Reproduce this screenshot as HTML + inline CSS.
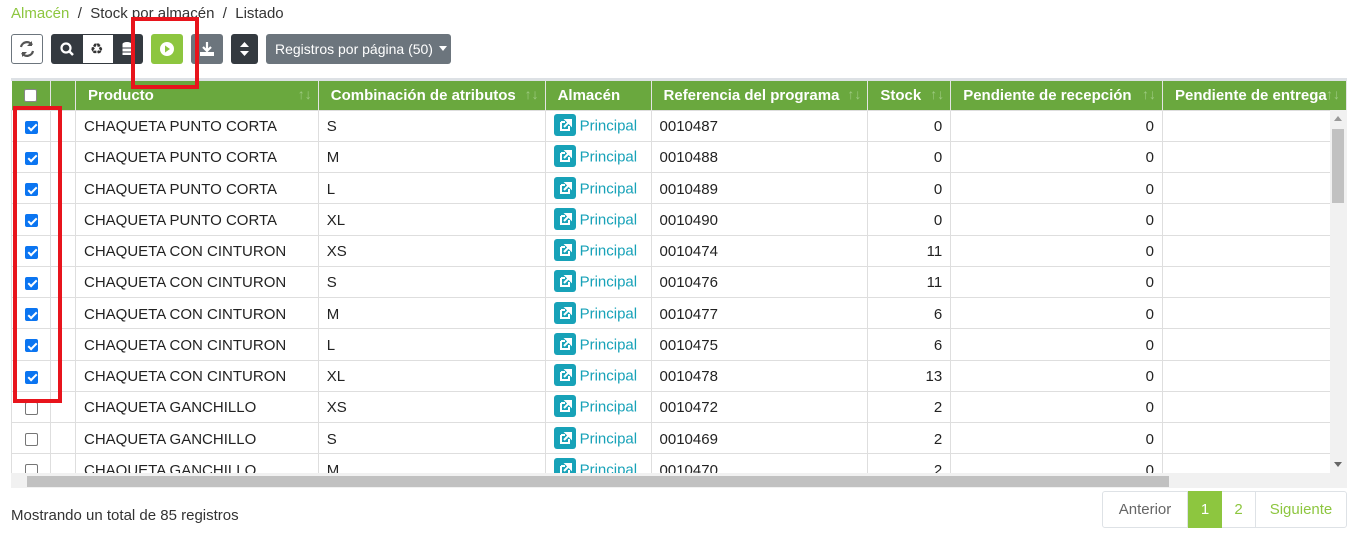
<!DOCTYPE html>
<html><head><meta charset="utf-8"><style>
*{box-sizing:border-box;margin:0;padding:0}
body{width:1353px;height:536px;background:#fff;font-family:"Liberation Sans",sans-serif;color:#222;position:relative;overflow:hidden}
.abs{position:absolute}
.bc{left:11px;top:5px;font-size:15px;color:#333}
.bc .g{color:#8dc63f}
.btn{position:absolute;top:34px;height:30px;border-radius:3px}
.wrap{position:absolute;left:11px;top:78px;width:1336px;height:410px;overflow:hidden;border-top:3px solid #dde1e5}
table{border-collapse:collapse;table-layout:fixed;position:absolute;left:0;top:0}
th{background:#6aa83e;color:#fff;font-size:15px;font-weight:bold;text-align:left;height:29px;padding:0 12px;border-right:1px solid #e4e4e4;white-space:nowrap;position:relative}
th .s{position:absolute;right:6px;top:5px;color:#9dca80;font-weight:normal;font-size:14px}
td{height:31.25px;border:1px solid #dedede;font-size:15px;padding:2px 8px 0;white-space:nowrap;overflow:hidden}
td.r{text-align:right}
.cb{display:inline-block;width:13px;height:13px;border:1px solid #767676;border-radius:2px;background:#fff;vertical-align:middle}
.cb.on{background:#0b75f1;border-color:#0b75f1;position:relative}
.cb.on:after{content:"";position:absolute;left:3.5px;top:0.5px;width:3px;height:7px;border:solid #fff;border-width:0 2px 2px 0;transform:rotate(45deg)}
.ic{display:inline-block;width:22px;height:22px;background:#17a2b8;border-radius:3px;vertical-align:middle;position:relative;margin-right:4px;margin-top:-3px}
.ic svg{position:absolute;left:0;top:0}
.pl{color:#17a2b8}
</style></head><body>
<div class="abs bc"><span class="g">Almacén</span> &nbsp;/&nbsp; Stock por almacén &nbsp;/&nbsp; Listado</div>

<div class="btn" style="left:11px;width:32px;border:1px solid #6c757d;background:#fff">
<svg width="30" height="28" viewBox="0 0 30 28"><path d="M9 12a6 6 0 0 1 11-2M21 16a6 6 0 0 1-11 2" stroke="#555" stroke-width="2.2" fill="none"/><path d="M20 6v5h-5z M10 22v-5h5z" fill="#555"/></svg></div>
<div class="btn" style="left:51px;width:92px;background:#343a40"></div>
<div class="btn" style="left:83px;width:30px;top:34px;background:#fff;border-radius:0;border-top:1px solid #343a40;border-bottom:1px solid #343a40"></div>
<svg class="abs" style="left:51px;top:34px" width="92" height="30"><circle cx="15" cy="14" r="4.5" stroke="#fff" stroke-width="2.2" fill="none"/><path d="M18 17l4 4" stroke="#fff" stroke-width="2.5"/><text x="39" y="20" font-size="15" fill="#333">♻</text><ellipse cx="76" cy="10" rx="4.5" ry="2" fill="#fff"/><rect x="71.5" y="10" width="9" height="11" fill="#fff"/><path d="M71.5 14h9M71.5 18h9" stroke="#343a40" stroke-width="1"/></svg>
<div class="btn" style="left:151px;width:32px;background:#8dc63f"><svg width="32" height="30"><circle cx="16" cy="15" r="7" fill="#fff"/><path d="M14 11.5v7l5-3.5z" fill="#8dc63f"/></svg></div>
<div class="btn" style="left:191px;width:32px;background:#6c757d"><svg width="32" height="30"><path d="M16 8v8M12 13l4 4 4-4" stroke="#fff" stroke-width="2.2" fill="none"/><rect x="9" y="18" width="14" height="4" fill="#fff"/></svg></div>
<div class="btn" style="left:231px;width:27px;background:#343a40"><svg width="27" height="30"><path d="M9 13l4.5-5 4.5 5zM9 17l4.5 5 4.5-5z" fill="#fff"/></svg></div>
<div class="btn" style="left:266px;width:185px;background:#6c757d;color:#fff;font-size:14px;line-height:30px;padding-left:9px">Registros por página (50) <span style="display:inline-block;border:4px solid transparent;border-top:5px solid #fff;vertical-align:middle;margin-left:2px"></span></div>

<div class="abs" style="left:131px;top:17px;width:68px;height:72px;border:4px solid #e8141c;z-index:5"></div>
<div class="abs" style="left:13px;top:106px;width:49px;height:297px;border:4px solid #e8141c;z-index:5"></div>

<div class="wrap">
<table>
<colgroup><col style="width:39px"><col style="width:25px"><col style="width:243px"><col style="width:227px"><col style="width:106px"><col style="width:217px"><col style="width:83px"><col style="width:212px"><col style="width:184px"></colgroup>
<tr><th style="padding:0 12px"><span class="cb" style="border-color:#888"></span></th><th></th><th>Producto<span class="s">↑↓</span></th><th>Combinación de atributos<span class="s">↑↓</span></th><th>Almacén</th><th>Referencia del programa<span class="s">↑↓</span></th><th>Stock<span class="s">↑↓</span></th><th>Pendiente de recepción<span class="s">↑↓</span></th><th>Pendiente de entrega<span class="s">↑↓</span></th></tr>
<tr><td style="padding-left:13px"><span class="cb on"></span></td><td></td><td>CHAQUETA PUNTO CORTA</td><td>S</td><td><span class="ic"><svg width="22" height="22"><path d="M7 8h4M7 8v8h8v-4" stroke="#fff" stroke-width="2" fill="none"/><path d="M10 13l6-6M12 6h5v5z" stroke="#fff" stroke-width="2" fill="#fff"/></svg></span><span class="pl">Principal</span></td><td>0010487</td><td class="r">0</td><td class="r">0</td><td></td></tr>
<tr><td style="padding-left:13px"><span class="cb on"></span></td><td></td><td>CHAQUETA PUNTO CORTA</td><td>M</td><td><span class="ic"><svg width="22" height="22"><path d="M7 8h4M7 8v8h8v-4" stroke="#fff" stroke-width="2" fill="none"/><path d="M10 13l6-6M12 6h5v5z" stroke="#fff" stroke-width="2" fill="#fff"/></svg></span><span class="pl">Principal</span></td><td>0010488</td><td class="r">0</td><td class="r">0</td><td></td></tr>
<tr><td style="padding-left:13px"><span class="cb on"></span></td><td></td><td>CHAQUETA PUNTO CORTA</td><td>L</td><td><span class="ic"><svg width="22" height="22"><path d="M7 8h4M7 8v8h8v-4" stroke="#fff" stroke-width="2" fill="none"/><path d="M10 13l6-6M12 6h5v5z" stroke="#fff" stroke-width="2" fill="#fff"/></svg></span><span class="pl">Principal</span></td><td>0010489</td><td class="r">0</td><td class="r">0</td><td></td></tr>
<tr><td style="padding-left:13px"><span class="cb on"></span></td><td></td><td>CHAQUETA PUNTO CORTA</td><td>XL</td><td><span class="ic"><svg width="22" height="22"><path d="M7 8h4M7 8v8h8v-4" stroke="#fff" stroke-width="2" fill="none"/><path d="M10 13l6-6M12 6h5v5z" stroke="#fff" stroke-width="2" fill="#fff"/></svg></span><span class="pl">Principal</span></td><td>0010490</td><td class="r">0</td><td class="r">0</td><td></td></tr>
<tr><td style="padding-left:13px"><span class="cb on"></span></td><td></td><td>CHAQUETA CON CINTURON</td><td>XS</td><td><span class="ic"><svg width="22" height="22"><path d="M7 8h4M7 8v8h8v-4" stroke="#fff" stroke-width="2" fill="none"/><path d="M10 13l6-6M12 6h5v5z" stroke="#fff" stroke-width="2" fill="#fff"/></svg></span><span class="pl">Principal</span></td><td>0010474</td><td class="r">11</td><td class="r">0</td><td></td></tr>
<tr><td style="padding-left:13px"><span class="cb on"></span></td><td></td><td>CHAQUETA CON CINTURON</td><td>S</td><td><span class="ic"><svg width="22" height="22"><path d="M7 8h4M7 8v8h8v-4" stroke="#fff" stroke-width="2" fill="none"/><path d="M10 13l6-6M12 6h5v5z" stroke="#fff" stroke-width="2" fill="#fff"/></svg></span><span class="pl">Principal</span></td><td>0010476</td><td class="r">11</td><td class="r">0</td><td></td></tr>
<tr><td style="padding-left:13px"><span class="cb on"></span></td><td></td><td>CHAQUETA CON CINTURON</td><td>M</td><td><span class="ic"><svg width="22" height="22"><path d="M7 8h4M7 8v8h8v-4" stroke="#fff" stroke-width="2" fill="none"/><path d="M10 13l6-6M12 6h5v5z" stroke="#fff" stroke-width="2" fill="#fff"/></svg></span><span class="pl">Principal</span></td><td>0010477</td><td class="r">6</td><td class="r">0</td><td></td></tr>
<tr><td style="padding-left:13px"><span class="cb on"></span></td><td></td><td>CHAQUETA CON CINTURON</td><td>L</td><td><span class="ic"><svg width="22" height="22"><path d="M7 8h4M7 8v8h8v-4" stroke="#fff" stroke-width="2" fill="none"/><path d="M10 13l6-6M12 6h5v5z" stroke="#fff" stroke-width="2" fill="#fff"/></svg></span><span class="pl">Principal</span></td><td>0010475</td><td class="r">6</td><td class="r">0</td><td></td></tr>
<tr><td style="padding-left:13px"><span class="cb on"></span></td><td></td><td>CHAQUETA CON CINTURON</td><td>XL</td><td><span class="ic"><svg width="22" height="22"><path d="M7 8h4M7 8v8h8v-4" stroke="#fff" stroke-width="2" fill="none"/><path d="M10 13l6-6M12 6h5v5z" stroke="#fff" stroke-width="2" fill="#fff"/></svg></span><span class="pl">Principal</span></td><td>0010478</td><td class="r">13</td><td class="r">0</td><td></td></tr>
<tr><td style="padding-left:13px"><span class="cb"></span></td><td></td><td>CHAQUETA GANCHILLO</td><td>XS</td><td><span class="ic"><svg width="22" height="22"><path d="M7 8h4M7 8v8h8v-4" stroke="#fff" stroke-width="2" fill="none"/><path d="M10 13l6-6M12 6h5v5z" stroke="#fff" stroke-width="2" fill="#fff"/></svg></span><span class="pl">Principal</span></td><td>0010472</td><td class="r">2</td><td class="r">0</td><td></td></tr>
<tr><td style="padding-left:13px"><span class="cb"></span></td><td></td><td>CHAQUETA GANCHILLO</td><td>S</td><td><span class="ic"><svg width="22" height="22"><path d="M7 8h4M7 8v8h8v-4" stroke="#fff" stroke-width="2" fill="none"/><path d="M10 13l6-6M12 6h5v5z" stroke="#fff" stroke-width="2" fill="#fff"/></svg></span><span class="pl">Principal</span></td><td>0010469</td><td class="r">2</td><td class="r">0</td><td></td></tr>
<tr><td style="padding-left:13px"><span class="cb"></span></td><td></td><td>CHAQUETA GANCHILLO</td><td>M</td><td><span class="ic"><svg width="22" height="22"><path d="M7 8h4M7 8v8h8v-4" stroke="#fff" stroke-width="2" fill="none"/><path d="M10 13l6-6M12 6h5v5z" stroke="#fff" stroke-width="2" fill="#fff"/></svg></span><span class="pl">Principal</span></td><td>0010470</td><td class="r">2</td><td class="r">0</td><td></td></tr>
</table>
<div class="abs" style="left:1319px;top:29px;width:17px;height:363px;background:#f1f1f1"><div style="position:absolute;left:2px;top:19px;width:12px;height:74px;background:#c1c1c1"></div><div style="position:absolute;left:4px;top:6px;border:4px solid transparent;border-bottom:5px solid #999;border-top:0"></div><div style="position:absolute;left:4px;bottom:6px;border:4px solid transparent;border-top:5px solid #666;border-bottom:0"></div></div>
<div class="abs" style="left:0;top:392px;width:1336px;height:17px;background:#f1f1f1"><div style="position:absolute;left:16px;top:3px;height:11px;background:#c1c1c1;width:1142px"></div></div>
</div>

<div class="abs" style="left:11px;top:507px;font-size:15px;color:#333">Mostrando un total de 85 registros</div>
<div class="abs" style="left:1102px;top:491px;width:245px;height:37px;border:1px solid #dee2e6;border-radius:3px;font-size:15px;line-height:36px">
<span class="abs" style="left:0;width:85px;text-align:center;color:#666;border-right:1px solid #dee2e6;height:35px">Anterior</span>
<span class="abs" style="left:85px;width:34px;text-align:center;color:#fff;background:#8dc63f;height:37px;top:-1px;line-height:38px">1</span>
<span class="abs" style="left:119px;width:34px;text-align:center;color:#8dc63f;border-right:1px solid #dee2e6;height:35px">2</span>
<span class="abs" style="left:153px;width:90px;text-align:center;color:#8dc63f">Siguiente</span>
</div>
</body></html>
